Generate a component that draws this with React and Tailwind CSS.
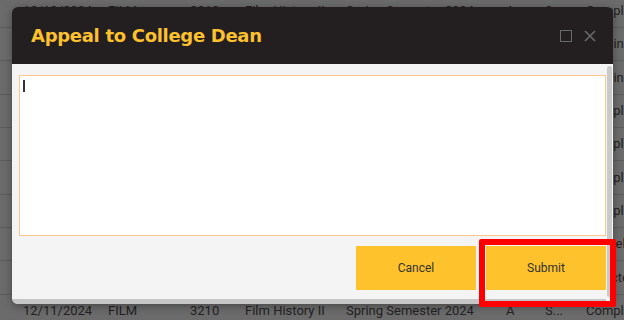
const rows = [
  { date: "12/13/2024", status: "Complete" },
  { date: "12/12/2024", status: "Grading" },
  { date: "12/12/2024", status: "Grading" },
  { date: "12/11/2024", status: "Complete" },
  { date: "12/11/2024", status: "Complete" },
  { date: "12/11/2024", status: "Complete" },
  { date: "12/11/2024", status: "Complete" },
  { date: "12/11/2024", status: "Cancelled" },
  { date: "12/11/2024", status: "Rejected" },
  { date: "12/11/2024", status: "Complete" },
];

function BackgroundTable() {
  return (
    <div className="-mt-[5.33px] text-[13px] text-[#222]" style={{ fontFamily: "Roboto, sans-serif" }}>
      {rows.map((r, i) => (
        <div
          key={i}
          className="grid h-[33.33px] grid-cols-[85px_82px_55px_101px_160px_39px_41px_1fr] items-center whitespace-nowrap border-b border-[#5d5d5d] pl-[23px]"
        >
          <span>{r.date}</span>
          <span>FILM</span>
          <span>3210</span>
          <span>Film History II</span>
          <span>Spring Semester 2024</span>
          <span>A</span>
          <span>S...</span>
          <span>{r.status}</span>
        </div>
      ))}
    </div>
  );
}

function AppealDialog() {
  return (
    <div className="absolute left-[12px] top-[7px] flex h-[297px] w-[601px] flex-col overflow-hidden rounded-[6px] shadow-[0_2px_8px_rgba(0,0,0,0.35)]">
      {/* header */}
      <div className="flex h-[57px] items-center justify-between bg-[#231f20] pl-[19px] pr-[17px]">
        <h2
          className="text-[18px] font-bold tracking-[-0.3px] text-[#fcc12d]"
          style={{ fontFamily: '"DejaVu Sans", Verdana, sans-serif' }}
        >
          Appeal to College Dean
        </h2>
        <div className="flex items-center gap-[12px]">
          <div className="h-[12px] w-[12px] border-[1.5px] border-[#6a6a6a]" />
          <svg width="12" height="12" viewBox="0 0 12 12" fill="none" stroke="#6a6a6a" strokeWidth="1.6">
            <path d="M1 1 L11 11 M11 1 L1 11" />
          </svg>
        </div>
      </div>

      {/* body */}
      <div className="flex flex-1 flex-col bg-[#f4f4f4]">
        <div className="flex flex-1">
          <div className="flex-1 pl-[7px] pt-[11px]">
            <div className="relative">
              <textarea
                readOnly
                className="block h-[161px] w-full resize-none border border-[#fbc78c] bg-white outline-none"
              />
              <span className="absolute left-[4px] top-[5px] h-[12px] w-[1.5px] bg-[#333]" />
            </div>
            <div
              className="mt-[10px] flex justify-end gap-[10px] text-[12px] text-[#333]"
              style={{ fontFamily: "Roboto, sans-serif" }}
            >
              <button className="h-[44px] w-[120px] bg-[#fdc22c]">Cancel</button>
              <button className="h-[44px] w-[120px] bg-[#fdc22c]">Submit</button>
            </div>
          </div>
          <div className="w-[7px] py-[2px] pl-[1px]">
            <div className="h-full w-[5px] rounded-full bg-[#c9c9c9]" />
          </div>
        </div>
        <div className="flex h-[5px]">
          <div className="flex-1 rounded-bl-[6px] bg-[#c6c6c6]" />
          <div className="w-[7px]" />
        </div>
      </div>
    </div>
  );
}

export default function App() {
  return (
    <div className="relative h-[320px] w-[624px] overflow-hidden bg-[#6b6b6b]">
      <BackgroundTable />
      <AppealDialog />
      {/* highlight marker */}
      <div className="absolute left-[479px] top-[239px] h-[68px] w-[137px] rounded-[2px] border-[6px] border-[#ff0000]" />
    </div>
  );
}
